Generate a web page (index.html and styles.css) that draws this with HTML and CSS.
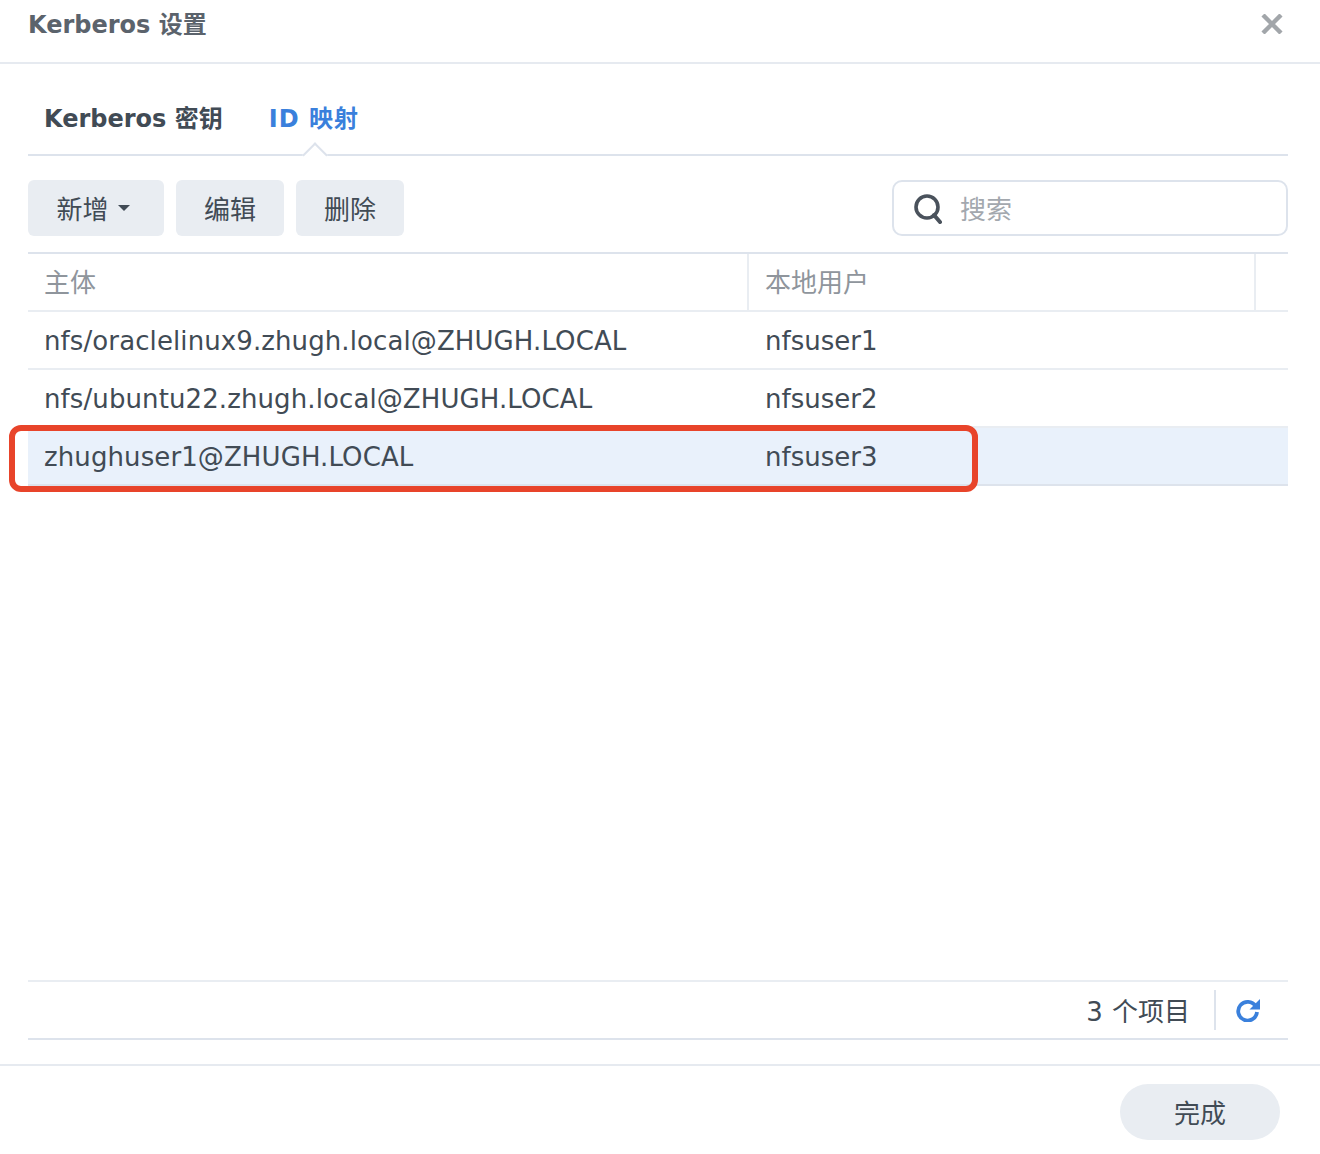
FILE: index.html
```html
<!DOCTYPE html>
<html lang="zh-CN">
<head>
<meta charset="utf-8">
<title>Kerberos 设置</title>
<link rel="stylesheet" href="styles.css">
</head>
<body>
<div class="dialog">
  <header class="head">
    <h1 class="title">Kerberos 设置</h1>
    <svg class="close" viewBox="0 0 22 20" aria-hidden="true"><path d="M2 1l18 18M20 1L2 19" fill="none" stroke="#a2a6aa" stroke-width="4.4"/></svg>
  </header>
  <main class="body">
    <nav class="tabs">
      <span class="tab">Kerberos 密钥</span>
      <span class="tab active">ID 映射</span>
    </nav>
    <div class="toolbar">
      <button class="btn btn-new">新增<span class="caret"></span></button>
      <button class="btn">编辑</button>
      <button class="btn">删除</button>
      <label class="search">
        <svg class="search-icon" viewBox="0 0 28 30" aria-hidden="true"><circle cx="13" cy="13" r="11" fill="none" stroke="#4a525c" stroke-width="3.6"/><path d="M20 21l6 7" fill="none" stroke="#4a525c" stroke-width="4" stroke-linecap="round"/></svg>
        <span class="placeholder">搜索</span>
      </label>
    </div>
    <div class="grid">
      <div class="row row-head">
        <div class="cell c1">主体</div>
        <div class="cell c2">本地用户</div>
        <div class="cell c3"></div>
      </div>
      <div class="row">
        <div class="cell c1">nfs/oraclelinux9.zhugh.local@ZHUGH.LOCAL</div>
        <div class="cell c2">nfsuser1</div>
      </div>
      <div class="row">
        <div class="cell c1">nfs/ubuntu22.zhugh.local@ZHUGH.LOCAL</div>
        <div class="cell c2">nfsuser2</div>
      </div>
      <div class="row selected">
        <div class="cell c1">zhughuser1@ZHUGH.LOCAL</div>
        <div class="cell c2">nfsuser3</div>
      </div>
    </div>
    <div class="status">
      <span class="count">3 个项目</span>
      <span class="sep"></span>
      <svg class="refresh" viewBox="0 0 24 24" aria-hidden="true"><path d="M19.6 8.2A9.4 9.4 0 1 0 21 14" fill="none" stroke="#3a80dc" stroke-width="3.8"/><path d="M24 1v10.5H13.5z" fill="#3a80dc"/></svg>
    </div>
  </main>
  <footer class="foot">
    <button class="done">完成</button>
  </footer>
  <div class="highlight"></div>
</div>
</body>
</html>
```
FILE: styles.css
```css
* { box-sizing: border-box; }
html, body { margin: 0; padding: 0; background: #fff; }
body { font-family: "DejaVu Sans", "Noto Sans CJK SC", sans-serif; color: #414b55; }
.dialog { position: relative; width: 1320px; height: 1154px; display: flex; flex-direction: column; overflow: hidden; }

.head { height: 64px; flex: none; display: flex; align-items: center; justify-content: space-between; padding: 0 37px 12px 28px; border-bottom: 2px solid #e6eaf0; }
.title { margin: 0; font-size: 24px; line-height: 48px; font-weight: 700; color: #5b636c; }
.close { width: 22px; height: 20px; margin-bottom: 2px; }

.body { flex: 1; display: flex; flex-direction: column; padding: 0 32px 0 28px; }

.tabs { height: 92px; flex: none; display: flex; align-items: center; gap: 46px; padding: 20px 0 0 16px; border-bottom: 2px solid #dde3ec; position: relative; }
.tab { font-size: 24px; line-height: 36px; font-weight: 700; color: #414b55; }
.tab.active { color: #3a80dc; position: relative; letter-spacing: 1px; }
.tab.active::after { content: ""; position: absolute; left: 37px; bottom: -27px; width: 16px; height: 16px; background: #fff; border-left: 2px solid #dde3ec; border-top: 2px solid #dde3ec; transform: rotate(45deg); }

.toolbar { flex: none; display: flex; gap: 12px; margin-top: 24px; height: 56px; }
.btn { height: 56px; width: 108px; border: 0; border-radius: 6px; background: #e9edf2; color: #414b55; font: inherit; font-size: 26px; padding: 0 0 2px; display: flex; align-items: center; justify-content: center; }
.btn-new { width: 136px; padding-right: 6px; }
.caret { margin: 2px 0 0 9px; width: 0; height: 0; border-left: 6.5px solid transparent; border-right: 6.5px solid transparent; border-top: 6px solid #414b55; }
.search { margin-left: auto; width: 396px; height: 56px; border: 2px solid #dde3ec; border-radius: 10px; display: flex; align-items: center; padding-left: 20px; }
.search-icon { width: 28px; height: 30px; margin-top: 2px; }
.placeholder { margin: 0 0 2px 18px; font-size: 26px; color: #a3a8ae; }

.grid { flex: 1; margin-top: 16px; border-top: 2px solid #dde3ec; display: flex; flex-direction: column; }
.row { flex: none; height: 58px; display: flex; border-bottom: 2px solid #e9edf2; }
.row.selected { background: #e9f1fb; border-bottom-color: #dde3ec; }
.row-head { color: #8f959c; }
.cell { font-size: 26px; line-height: 58px; padding-left: 16px; white-space: nowrap; height: 56px; }
.c1 { width: 721px; letter-spacing: 0.1px; }
.c2 { flex: 1; }
.row-head .c2 { border-left: 2px solid #e9edf2; flex: none; width: 509px; border-right: 2px solid #e9edf2; }
.row-head .c1 { width: 719px; }

.status { flex: none; height: 60px; border-top: 2px solid #e9edf2; border-bottom: 2px solid #dde3ec; display: flex; align-items: center; justify-content: flex-end; padding-right: 28px; }
.count { font-size: 26px; margin-bottom: 2px; word-spacing: 1px; }
.sep { width: 2px; height: 40px; background: #dde3ec; margin: 0 20px 0 24px; }
.refresh { width: 24px; height: 24px; }

.foot { flex: none; height: 90px; margin-top: 24px; border-top: 2px solid #e6eaf0; display: flex; justify-content: flex-end; padding: 18px 40px 0 0; }
.done { width: 160px; height: 56px; border: 0; border-radius: 28px; background: #e9edf2; color: #414b55; font: inherit; font-size: 26px; padding: 0 0 2px; }

.highlight { position: absolute; left: 9px; top: 425px; width: 969px; height: 67px; border: 6px solid #e8442a; border-radius: 12px; }
```
